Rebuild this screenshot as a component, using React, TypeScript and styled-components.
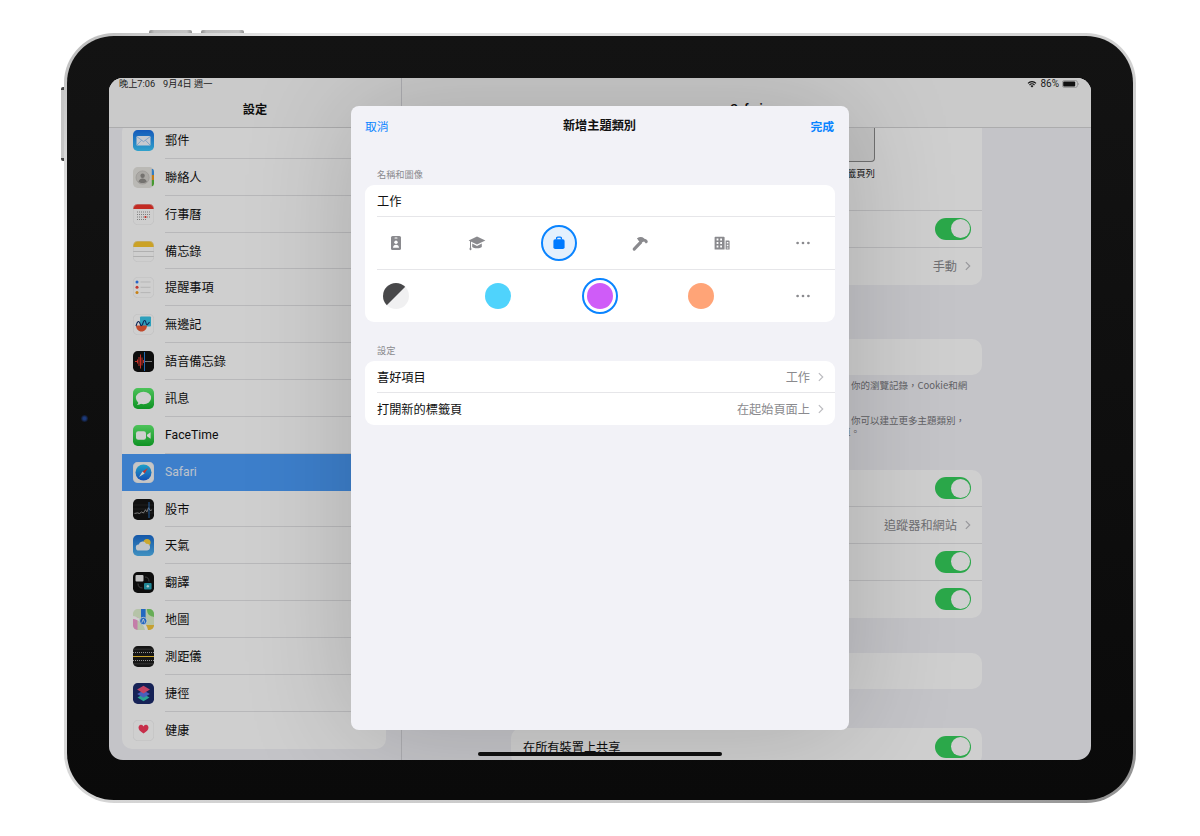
import React from 'react';
import styled, { createGlobalStyle } from 'styled-components';

const GlobalStyle = createGlobalStyle`
  html, body {
    margin: 0;
    padding: 0;
    background: #fff;
  }
  body {
    font-family: Roboto, "Noto Sans CJK TC", sans-serif;
    color: #111;
  }
`;

/* ---------- app icons for the settings list ---------- */

const Tile = styled.svg`
  width: 21px;
  height: 21px;
  flex: none;
  display: block;
`;

const AppIcon: React.FC<{ bg: string; children?: React.ReactNode; line?: boolean }> = ({ bg, children, line }) => (
  <Tile viewBox="0 0 21 21">
    <defs>
      <linearGradient id="gMail" x1="0" y1="0" x2="0" y2="1"><stop offset="0" stopColor="#1a6fe6" /><stop offset="1" stopColor="#3cc8fb" /></linearGradient>
      <linearGradient id="gGreen" x1="0" y1="0" x2="0" y2="1"><stop offset="0" stopColor="#5ff06f" /><stop offset="1" stopColor="#12b52c" /></linearGradient>
      <linearGradient id="gSky" x1="0" y1="0" x2="0" y2="1"><stop offset="0" stopColor="#1a6cd0" /><stop offset="1" stopColor="#4fb3ee" /></linearGradient>
      <linearGradient id="gCompass" x1="0" y1="0" x2="0" y2="1"><stop offset="0" stopColor="#27c5f5" /><stop offset="1" stopColor="#1a62e0" /></linearGradient>
      <clipPath id="tileClip"><rect width="21" height="21" rx="4.7" /></clipPath>
    </defs>
    <g clipPath="url(#tileClip)">
      <rect width="21" height="21" fill={bg} />
      {children}
    </g>
    {line && <rect x=".25" y=".25" width="20.5" height="20.5" rx="4.6" fill="none" stroke="#e4e4e6" strokeWidth=".5" />}
  </Tile>
);

const MailIcon = () => (
  <AppIcon bg="url(#gMail)">
    <rect x="3.5" y="6" width="14" height="9.6" rx="1.2" fill="#f4f8ff" />
    <path d="M3.8 6.6l6.7 5 6.7-5M3.8 15.2l4.8-5M17.2 15.2l-4.8-5" fill="none" stroke="#7fb6ee" strokeWidth=".7" />
  </AppIcon>
);
const ContactsIcon = () => (
  <AppIcon bg="#e6e4df">
    <circle cx="9.6" cy="10.5" r="6.6" fill="#d3d1cc" stroke="#b8b6b1" strokeWidth=".6" />
    <circle cx="9.6" cy="8.8" r="2.2" fill="#8f8d89" />
    <path d="M5.4 14.8c.8-2.4 2.4-3.2 4.2-3.2s3.4.8 4.2 3.2c-2 1.6-6.4 1.6-8.4 0z" fill="#8f8d89" />
    <rect x="18.8" y="2" width="2.2" height="6" fill="#3d9bf0" />
    <rect x="18.8" y="8" width="2.2" height="5" fill="#f09a1e" />
    <rect x="18.8" y="13" width="2.2" height="6" fill="#57bd3c" />
  </AppIcon>
);
const CalendarIcon = () => (
  <AppIcon bg="#fff" line>
    <rect width="21" height="5" fill="#f0352c" />
    <path d="M4 8h13M4 10.5h13M4 13h13M4 15.5h9" stroke="#9a9a9a" strokeWidth="1" strokeDasharray="1 1" fill="none" />
    <circle cx="12.5" cy="13" r="1.1" fill="#f0352c" />
  </AppIcon>
);
const NotesIcon = () => (
  <AppIcon bg="#fff" line>
    <rect width="21" height="6" fill="#fbc82f" />
    <path d="M0 10.5h21M0 15.5h21" stroke="#c9c9c9" strokeWidth=".7" />
  </AppIcon>
);
const RemindersIcon = () => (
  <AppIcon bg="#fff" line>
    <circle cx="4" cy="5" r="1.5" fill="#2f7cf6" />
    <circle cx="4" cy="10.3" r="1.5" fill="#f0453a" />
    <circle cx="4" cy="15.6" r="1.5" fill="#f59e1b" />
    <path d="M7.5 5h10M7.5 10.3h10M7.5 15.6h10" stroke="#d2d2d2" strokeWidth=".7" />
  </AppIcon>
);
const FreeformIcon = () => (
  <AppIcon bg="#fff" line>
    <rect x="7" y="2.5" width="11" height="10" rx="1" fill="#38c6e8" />
    <path d="M3 11.5h11c0 3.4-2.4 6-5.5 6S3 14.9 3 11.5z" fill="#ee5a36" />
    <path d="M3 12c1.5-5.5 3-5.5 4-2.5s2 3 3-.5 2.5-3 3 0 2 1.5 3.5-1" fill="none" stroke="#10306c" strokeWidth="1.1" />
  </AppIcon>
);
const VoiceIcon = () => (
  <AppIcon bg="#111">
    <path d="M2 10.5h2M4.5 8.5v4M6 6v9M7.5 3.5v14M9 6.5v8M10.5 9v3" stroke="#ef3a2f" strokeWidth="1" />
    <path d="M12 10.5h7" stroke="#b9b9b9" strokeWidth=".8" />
    <path d="M11.5 1v19" stroke="#2d8cf0" strokeWidth=".9" />
  </AppIcon>
);
const MessagesIcon = () => (
  <AppIcon bg="url(#gGreen)">
    <ellipse cx="10.5" cy="10" rx="7.6" ry="6.2" fill="#fff" />
    <path d="M5.5 13.5c0 1.5-.7 2.7-1.6 3.4 1.8 0 3.4-.7 4.4-1.7z" fill="#fff" />
  </AppIcon>
);
const FaceTimeIcon = () => (
  <AppIcon bg="url(#gGreen)">
    <rect x="3" y="6.2" width="10" height="8.6" rx="2.2" fill="#fff" />
    <path d="M14 9.8l3.6-2.6v6.6L14 11.2z" fill="#fff" />
  </AppIcon>
);
const SafariIcon = () => (
  <AppIcon bg="#f4f4f4" line>
    <circle cx="10.5" cy="10.5" r="8" fill="url(#gCompass)" />
    <path d="M15 6l-5.6 3.4 2.2 2.2z" fill="#f0453a" />
    <path d="M6 15l3.4-5.6 2.2 2.2z" fill="#fff" />
  </AppIcon>
);
const StocksIcon = () => (
  <AppIcon bg="#141414">
    <path d="M0 6h21M0 10h21M0 14h21" stroke="#3a3a3a" strokeWidth=".5" />
    <path d="M1.5 14.5l3-.6 2 .6 2-1.5 2 .9 2-3.2 1.4 2.2 1.6-4.2 1.5 2.8 2-.6" fill="none" stroke="#c8c8c8" strokeWidth=".7" />
    <path d="M16 3v16" stroke="#2d8cf0" strokeWidth=".8" />
  </AppIcon>
);
const WeatherIcon = () => (
  <AppIcon bg="url(#gSky)">
    <circle cx="14" cy="7.5" r="3.6" fill="#fbcf3a" />
    <path d="M6 15.5a3 3 0 0 1-.3-6 4 4 0 0 1 7.4-.8 3.4 3.4 0 0 1 1 6.8z" fill="#eef3f8" />
  </AppIcon>
);
const TranslateIcon = () => (
  <AppIcon bg="#111">
    <rect x="2.5" y="3" width="8" height="6.6" rx="1" fill="#f1f1f1" />
    <rect x="11" y="11" width="7.6" height="6.6" rx="1" fill="#29a5b8" />
    <path d="M5 11.5c0 3 1.5 4.5 4.5 4.5M16 9.5c0-3-1.5-4.5-4-4.5" fill="none" stroke="#6b6b6b" strokeWidth=".7" />
    <circle cx="14.8" cy="14.3" r="1.2" fill="#d9f4f7" />
  </AppIcon>
);
const MapsIcon = () => (
  <AppIcon bg="#dff1cf">
    <path d="M14 0c0 6 3 7 7 8v-8z" fill="#7fd66a" />
    <rect y="8" width="4.5" height="13" fill="#f29ad0" />
    <path d="M13 21v-5h8v5z" fill="#f5c63c" />
    <path d="M0 7c6 1 14 7 15 14h-3C11 15 5 10 0 10z" fill="#fff" />
    <rect x="8" y="0" width="4.6" height="11" fill="#2a80ee" />
    <circle cx="10.3" cy="12" r="3.7" fill="#2a80ee" stroke="#fff" strokeWidth=".8" />
    <path d="M8.8 13.8l1.5-3.8 1.5 3.8" fill="none" stroke="#fff" strokeWidth=".8" />
  </AppIcon>
);
const MeasureIcon = () => (
  <AppIcon bg="#1b1b1b">
    <path d="M0 10.5h21" stroke="#f5c732" strokeWidth="1.2" />
    <path d="M0 6.5h21M0 14.5h21" stroke="#b5b5b5" strokeWidth="1" strokeDasharray="1 1" />
    <path d="M0 3.2h21M0 17.8h21" stroke="#555" strokeWidth=".6" />
  </AppIcon>
);
const ShortcutsIcon = () => (
  <AppIcon bg="#1c2a6b">
    <path d="M10.5 11l6 3.6-6 3.6-6-3.6z" fill="#36c9b4" />
    <path d="M10.5 7.4l6.4 3.6-6.4 3.8-6.4-3.8z" fill="#5a74e8" />
    <path d="M10.5 2.8l6.4 3.8-6.4 3.8-6.4-3.8z" fill="#f0527c" />
  </AppIcon>
);
const HealthIcon = () => (
  <AppIcon bg="#fff" line>
    <path d="M10.5 13.5c-3-2-5-3.6-5-6a2.6 2.6 0 0 1 5-1.1 2.6 2.6 0 0 1 5 1.1c0 2.4-2 4-5 6z" fill="#f5395c" />
  </AppIcon>
);

const settingsRows: { label: string; icon: React.ReactNode; active?: boolean }[] = [
  { label: '郵件', icon: <MailIcon /> },
  { label: '聯絡人', icon: <ContactsIcon /> },
  { label: '行事曆', icon: <CalendarIcon /> },
  { label: '備忘錄', icon: <NotesIcon /> },
  { label: '提醒事項', icon: <RemindersIcon /> },
  { label: '無邊記', icon: <FreeformIcon /> },
  { label: '語音備忘錄', icon: <VoiceIcon /> },
  { label: '訊息', icon: <MessagesIcon /> },
  { label: 'FaceTime', icon: <FaceTimeIcon /> },
  { label: 'Safari', icon: <SafariIcon />, active: true },
  { label: '股市', icon: <StocksIcon /> },
  { label: '天氣', icon: <WeatherIcon /> },
  { label: '翻譯', icon: <TranslateIcon /> },
  { label: '地圖', icon: <MapsIcon /> },
  { label: '測距儀', icon: <MeasureIcon /> },
  { label: '捷徑', icon: <ShortcutsIcon /> },
  { label: '健康', icon: <HealthIcon /> },
];

/* ---------- glyphs in the sheet ---------- */

const Glyph = styled.svg`
  width: 18px;
  height: 18px;
  display: block;
  fill: #8a8a8e;
`;

const BadgeGlyph = () => (
  <Glyph viewBox="0 0 18 18">
    <rect x="4" y="2" width="10" height="14" rx="1.6" />
    <rect x="7.5" y="3.6" width="3" height="1" rx=".5" fill="#fff" />
    <circle cx="9" cy="8.2" r="1.7" fill="#fff" />
    <path d="M6 13.8c0-2 1.3-3 3-3s3 1 3 3z" fill="#fff" />
  </Glyph>
);
const CapGlyph = () => (
  <Glyph viewBox="0 0 18 18">
    <path d="M9 2.4l8.4 4.1L9 10.6.6 6.5z" />
    <path d="M4.2 9.6v3.4c1.6 1.7 8 1.7 9.6 0V9.6L9 12z" />
    <rect x="2" y="7" width="1" height="7.4" />
    <rect x="1.6" y="13.6" width="1.8" height="2.6" rx=".8" />
  </Glyph>
);
const BagGlyph = () => (
  <Glyph viewBox="0 0 18 18">
    <rect x="3.4" y="5.2" width="11.2" height="9.8" rx="1.8" fill="#007aff" />
    <path d="M6.6 5.6V4.2a1.1 1.1 0 0 1 1.1-1.1h2.6a1.1 1.1 0 0 1 1.1 1.1v1.4" fill="none" stroke="#007aff" strokeWidth="1.3" />
  </Glyph>
);
const HammerGlyph = () => (
  <Glyph viewBox="0 0 18 18">
    <path d="M2.1 14.1l6.6-7 2.3 2.2-6.7 7a1.5 1.5 0 0 1-2.2-2.2z" />
    <path d="M5.8 4.4c2.6-1.8 5.2-1.9 7.2-.2l1 1 .9-.2 1.9 2-.4 1.8-1.5.6-1.8-1.9-1.5.6-1.3 1.3-2.9-3c-.5-1-1-1.6-1.6-2z" />
  </Glyph>
);
const BuildingGlyph = () => (
  <Glyph viewBox="0 0 18 18">
    <path fillRule="evenodd" d="M2.4 2.8h8.4a.8.8 0 0 1 .8.8v12H1.6v-12a.8.8 0 0 1 .8-.8zM3.6 4.6v2h1.8v-2zm3.6 0v2H9v-2zM3.6 8v2h1.8V8zm3.6 0v2H9V8zm-3.6 3.4v2h1.8v-2zm3.6 0v2H9v-2z" />
    <path fillRule="evenodd" d="M12.6 6.4h3.2a.8.8 0 0 1 .8.8v8.4h-4zm1.2 1.6v1.4h1.6V8zm0 2.8v1.4h1.6v-1.4zm0 2.6v1.2h1.6v-1.2z" />
  </Glyph>
);
const MoreGlyph = () => (
  <Glyph viewBox="0 0 18 18">
    <circle cx="3.6" cy="9" r="1.35" />
    <circle cx="9" cy="9" r="1.35" />
    <circle cx="14.4" cy="9" r="1.35" />
  </Glyph>
);

const Chevron = styled.svg.attrs({ viewBox: '0 0 7 11' })`
  width: 6px;
  height: 10px;
  flex: none;
  fill: none;
  stroke: #bcbcc0;
  stroke-width: 1.4;
`;
const ChevronIcon = () => (
  <Chevron>
    <path d="M1 1l4.5 4.5L1 10" />
  </Chevron>
);

/* ---------- device shell ---------- */

const Page = styled.div`
  width: 1200px;
  height: 836px;
  overflow: hidden;
  display: flex;
  justify-content: center;
  padding-top: 33px;
  box-sizing: border-box;
`;

const Shell = styled.div`
  position: relative;
  width: 1072px;
  height: 770px;
  padding: 3px;
  box-sizing: border-box;
  border-radius: 50px;
  background: linear-gradient(140deg, #b9b9b9 0%, #e9e9e9 12%, #d4d4d4 50%, #c4c4c4 80%, #8f8f8f 100%);
`;

const TopKey = styled.div`
  position: absolute;
  top: -3px;
  left: ${({ $left }: { $left: number }) => $left}px;
  width: 43px;
  height: 3px;
  border-radius: 2px 2px 0 0;
  background: linear-gradient(90deg, #8f8f8f, #bdbdbd 12%, #c4c4c4 88%, #8f8f8f);
`;

const SideKey = styled.div`
  position: absolute;
  top: 54px;
  left: -3px;
  width: 3px;
  height: 74px;
  border-radius: 2px 0 0 2px;
  background: linear-gradient(180deg, #444 0 3px, #c6c6c6 3px calc(100% - 3px), #444 calc(100% - 3px));
`;

const Bezel = styled.div`
  width: 100%;
  height: 100%;
  box-sizing: border-box;
  padding: 42px 42px 40px;
  border-radius: 47px;
  background: linear-gradient(180deg, #131313 0%, #0a0a0a 100%);
  position: relative;
`;

const Camera = styled.div`
  position: absolute;
  left: 14px;
  top: 379px;
  width: 7px;
  height: 7px;
  border-radius: 50%;
  background: radial-gradient(circle, #1c3a7c 0 25%, #10182a 70%);
`;

const Screen = styled.div`
  position: relative;
  width: 982px;
  height: 682px;
  border-radius: 14px;
  overflow: hidden;
  display: grid;
  grid-template-columns: 293px 1fr;
  background: #f2f2f7;
`;

const Dim = styled.div`
  position: absolute;
  inset: 0;
  background: rgba(0, 0, 0, 0.19);
  z-index: 1;
`;

/* ---------- status bar ---------- */

const StatusBar = styled.div`
  position: absolute;
  top: 0;
  left: 0;
  right: 0;
  height: 11px;
  padding: 0 11px 0 10px;
  display: flex;
  align-items: center;
  justify-content: space-between;
  font-size: 9.2px;
  line-height: 11px;
  color: #1c1c1c;
  z-index: 3;
`;

const StatusGroup = styled.div`
  display: flex;
  align-items: center;
  gap: ${({ $gap }: { $gap: number }) => $gap}px;
  white-space: nowrap;
`;

const StatusPercent = styled.span`
  font-size: 10px;
`;

/* ---------- sidebar ---------- */

const Sidebar = styled.aside`
  display: flex;
  flex-direction: column;
  min-height: 0;
  border-right: 1px solid #d6d6da;
`;

const BarTitle = styled.div`
  flex: none;
  height: 50px;
  box-sizing: border-box;
  padding-top: 13px;
  display: flex;
  align-items: center;
  justify-content: center;
  background: #f9f9f9;
  border-bottom: 1px solid #d4d4d6;
  font-size: 12.2px;
  font-weight: 600;
`;

const SidebarScroll = styled.div`
  flex: 1;
  min-height: 0;
  overflow: hidden;
`;

const SettingsGroup = styled.div`
  margin: -6px 15px 0 13px;
  background: #fff;
  border-radius: 10px;
  overflow: hidden;
`;

const SettingsRow = styled.div<{ $active?: boolean }>`
  height: 36.87px;
  padding-left: 11px;
  display: flex;
  align-items: center;
  gap: 11px;
  font-size: 12.2px;
  background: ${({ $active }) => ($active ? '#4c9dfb' : 'transparent')};
  color: ${({ $active }) => ($active ? '#e6effa' : '#111')};
`;

const SettingsLabel = styled.div<{ $last?: boolean }>`
  flex: 1;
  height: 100%;
  display: flex;
  align-items: center;
  border-bottom: ${({ $last }) => ($last ? 'none' : '1px solid #e3e3e6')};
  box-sizing: border-box;
`;

/* ---------- detail pane behind the sheet ---------- */

const Detail = styled.main`
  display: flex;
  flex-direction: column;
  min-height: 0;
  overflow: hidden;
`;

const DetailBody = styled.div`
  flex: 1;
  min-height: 0;
  overflow: hidden;
  padding: 0 109px;
`;

const DetailGroup = styled.div<{ $top?: number; $flatTop?: boolean }>`
  margin-top: ${({ $top }) => $top ?? 0}px;
  background: #fff;
  border-radius: ${({ $flatTop }) => ($flatTop ? '0 0 10px 10px' : '10px')};
  overflow: hidden;
`;

const DetailRow = styled.div<{ $last?: boolean }>`
  height: 36.8px;
  box-sizing: border-box;
  padding: 0 11px 0 12px;
  display: flex;
  align-items: center;
  justify-content: space-between;
  font-size: 12.2px;
  border-bottom: ${({ $last }) => ($last ? 'none' : '1px solid #e3e3e6')};
`;

const Value = styled.div`
  margin-left: auto;
  display: flex;
  align-items: center;
  gap: 8px;
  color: #8a8a8e;
  font-size: 12.2px;
`;

const Toggle = styled.div`
  margin-left: auto;
  width: 36px;
  height: 22px;
  box-sizing: border-box;
  padding: 1.5px;
  border-radius: 11px;
  background: #36cf5c;
  display: flex;
  justify-content: flex-end;
`;

const ToggleKnob = styled.div`
  width: 19px;
  height: 19px;
  border-radius: 50%;
  background: #fff;
`;

const TabLayout = styled.div`
  height: 83px;
  box-sizing: border-box;
  padding-right: 107px;
  border-bottom: 1px solid #e3e3e6;
  display: flex;
  flex-direction: column;
  align-items: flex-end;
`;

const TabThumb = styled.div`
  width: 110px;
  height: 34px;
  box-sizing: border-box;
  background: #f0f0f0;
  border: solid #8c8c8c;
  border-width: 0 1.5px 1.5px 1.5px;
  border-radius: 0 0 4px 4px;
`;

const TabLabel = styled.div`
  margin-top: 5px;
  font-size: 9.4px;
  line-height: 14px;
  color: #222;
`;

const Footnote = styled.div<{ $indent: number; $first?: number; $top: number }>`
  margin-top: ${({ $top }) => $top}px;
  padding-left: ${({ $indent }) => $indent}px;
  text-indent: ${({ $first }) => $first ?? 0}px;
  font-family: "Noto Sans CJK TC", sans-serif;
  font-size: 9.5px;
  line-height: 11px;
  color: #77777b;
  white-space: nowrap;
`;

/* ---------- modal sheet ---------- */

const Sheet = styled.section`
  position: absolute;
  left: 242px;
  top: 28px;
  width: 498px;
  height: 624px;
  border-radius: 8px;
  background: #f2f2f7;
  box-shadow: 0 0 110px rgba(0, 0, 0, 0.18);
  z-index: 2;
  padding: 0 14px;
  box-sizing: border-box;
`;

const SheetNav = styled.header`
  height: 38px;
  padding-right: 1px;
  display: flex;
  align-items: center;
  justify-content: space-between;
  font-size: 11.8px;
  color: #0a84ff;
`;

const NavDone = styled.span`
  font-weight: 600;
`;

const SheetTitle = styled.span`
  color: #111;
  font-weight: 700;
  font-size: 12.2px;
`;

const SectionLabel = styled.div<{ $top: number }>`
  margin-top: ${({ $top }) => $top}px;
  padding-left: 12px;
  height: 11px;
  line-height: 11px;
  font-size: 9.2px;
  color: #8a8a8e;
`;

const Card = styled.div`
  margin-top: 5px;
  background: #fff;
  border-radius: 9px;
  overflow: hidden;
`;

const NameRow = styled.div`
  height: 32px;
  box-sizing: border-box;
  margin-left: 12px;
  display: flex;
  align-items: center;
  font-size: 12.2px;
  border-bottom: 1px solid #e6e6e9;
`;

const PickerRow = styled.div<{ $last?: boolean }>`
  height: ${({ $last }) => ($last ? 52 : 53)}px;
  box-sizing: border-box;
  margin-left: 12px;
  padding: 0 14px 1px 1px;
  display: flex;
  align-items: center;
  justify-content: space-between;
  border-bottom: ${({ $last }) => ($last ? 'none' : '1px solid #e6e6e9')};
`;

const Option = styled.div<{ $selected?: boolean; $tint?: string }>`
  width: 36px;
  height: 36px;
  box-sizing: border-box;
  border-radius: 50%;
  display: flex;
  align-items: center;
  justify-content: center;
  border: ${({ $selected }) => ($selected ? '2px solid #0a84ff' : 'none')};
  background: ${({ $tint }) => $tint ?? 'transparent'};
`;

const Swatch = styled.div<{ $fill: string }>`
  width: 26px;
  height: 26px;
  border-radius: 50%;
  background: ${({ $fill }) => $fill};
`;

const LinkRow = styled.div<{ $last?: boolean }>`
  height: 32px;
  box-sizing: border-box;
  margin-left: 12px;
  padding-right: 11px;
  display: flex;
  align-items: center;
  font-size: 12.2px;
  border-bottom: ${({ $last }) => ($last ? 'none' : '1px solid #e6e6e9')};
`;

const HomeBar = styled.div`
  position: absolute;
  left: 369px;
  bottom: 4px;
  width: 244px;
  height: 4px;
  border-radius: 2px;
  background: #0e0e0e;
  z-index: 3;
`;

const On = () => (
  <Toggle>
    <ToggleKnob />
  </Toggle>
);

const App: React.FC = () => (
  <>
    <GlobalStyle />
    <Page lang="zh-Hant">
      <Shell>
        <TopKey $left={85} />
        <TopKey $left={137} />
        <SideKey />
        <Bezel>
          <Camera />
          <Screen>
            <Sidebar>
              <BarTitle>設定</BarTitle>
              <SidebarScroll>
                <SettingsGroup>
                  {settingsRows.map((row, i) => (
                    <SettingsRow key={row.label} $active={row.active}>
                      {row.icon}
                      <SettingsLabel $last={row.active || i === settingsRows.length - 1}>{row.label}</SettingsLabel>
                    </SettingsRow>
                  ))}
                </SettingsGroup>
              </SidebarScroll>
            </Sidebar>

            <Detail>
              <BarTitle>Safari</BarTitle>
              <DetailBody>
                <DetailGroup $flatTop>
                  <TabLayout>
                    <TabThumb />
                    <TabLabel>標籤頁列</TabLabel>
                  </TabLayout>
                  <DetailRow><On /></DetailRow>
                  <DetailRow $last>
                    <Value>手動<ChevronIcon /></Value>
                  </DetailRow>
                </DetailGroup>

                <DetailGroup $top={54}>
                  <DetailRow $last />
                </DetailGroup>
                <Footnote $indent={340} $top={5}>你的瀏覽記錄，Cookie和網</Footnote>
                <Footnote $indent={330} $first={10} $top={24}>
                  你可以建立更多主題類別，
                  <br />
                  道。
                </Footnote>

                <DetailGroup $top={33}>
                  <DetailRow><On /></DetailRow>
                  <DetailRow>
                    <Value>追蹤器和網站<ChevronIcon /></Value>
                  </DetailRow>
                  <DetailRow><On /></DetailRow>
                  <DetailRow $last><On /></DetailRow>
                </DetailGroup>

                <DetailGroup $top={35}>
                  <DetailRow $last />
                </DetailGroup>

                <DetailGroup $top={39}>
                  <DetailRow $last>
                    在所有裝置上共享
                    <On />
                  </DetailRow>
                </DetailGroup>
              </DetailBody>
            </Detail>

            <Dim />

            <StatusBar>
              <StatusGroup $gap={8}>
                <span>晚上7:06</span>
                <span>9月4日 週一</span>
              </StatusGroup>
              <StatusGroup $gap={3}>
                <svg width="10" height="8" viewBox="0 0 10 8">
                  <path d="M5 7.6L3.5 6a2.1 2.1 0 0 1 3 0z" fill="#111" />
                  <path d="M2.5 5a3.6 3.6 0 0 1 5 0M1 3.3a5.6 5.6 0 0 1 8 0" fill="none" stroke="#111" strokeWidth="1.1" />
                </svg>
                <StatusPercent>86%</StatusPercent>
                <svg width="18" height="8" viewBox="0 0 18 8">
                  <rect x=".4" y=".6" width="15" height="6.8" rx="1.8" fill="none" stroke="#777" strokeWidth=".6" />
                  <rect x="1.2" y="1.4" width="12" height="5.2" rx="1" fill="#111" />
                  <path d="M16.3 2.8c.7.2.7 2.2 0 2.4z" fill="#777" />
                </svg>
              </StatusGroup>
            </StatusBar>

            <Sheet>
              <SheetNav>
                <span>取消</span>
                <SheetTitle>新增主題類別</SheetTitle>
                <NavDone>完成</NavDone>
              </SheetNav>

              <SectionLabel $top={25}>名稱和圖像</SectionLabel>
              <Card>
                <NameRow>工作</NameRow>
                <PickerRow>
                  <Option><BadgeGlyph /></Option>
                  <Option><CapGlyph /></Option>
                  <Option $selected $tint="#e4f0fd"><BagGlyph /></Option>
                  <Option><HammerGlyph /></Option>
                  <Option><BuildingGlyph /></Option>
                  <Option><MoreGlyph /></Option>
                </PickerRow>
                <PickerRow $last>
                  <Option><Swatch $fill="linear-gradient(135deg, #48484a 49%, #f0f0f1 51%)" /></Option>
                  <Option><Swatch $fill="#4fd3fc" /></Option>
                  <Option $selected><Swatch $fill="#cf5cf8" /></Option>
                  <Option><Swatch $fill="#ffa477" /></Option>
                  <Option><MoreGlyph /></Option>
                </PickerRow>
              </Card>

              <SectionLabel $top={23}>設定</SectionLabel>
              <Card>
                <LinkRow>
                  喜好項目
                  <Value>工作<ChevronIcon /></Value>
                </LinkRow>
                <LinkRow $last>
                  打開新的標籤頁
                  <Value>在起始頁面上<ChevronIcon /></Value>
                </LinkRow>
              </Card>
            </Sheet>

            <HomeBar />
          </Screen>
        </Bezel>
      </Shell>
    </Page>
  </>
);

export default App;
